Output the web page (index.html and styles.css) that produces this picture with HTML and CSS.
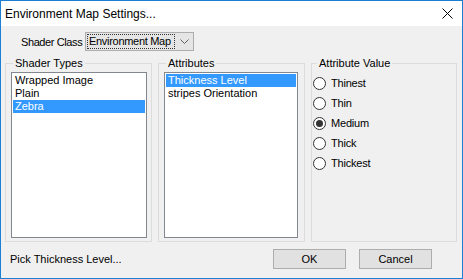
FILE: index.html
```html
<!DOCTYPE html>
<html lang="en">
<head>
<meta charset="utf-8">
<title>Environment Map Settings...</title>
<link rel="stylesheet" href="styles.css">
</head>
<body>
<div class="window">
  <div class="titlebar">
    <span class="title">Environment Map Settings...</span>
    <svg class="close" width="11" height="11" viewBox="0 0 11 11" aria-label="Close">
      <path d="M0.5 0.5 L10.5 10.5 M10.5 0.5 L0.5 10.5" stroke="#000" stroke-width="1" fill="none"/>
    </svg>
  </div>
  <div class="content">
    <div class="class-row">
      <span class="class-label">Shader Class</span>
      <div class="combo">
        <span class="combo-text">Environment Map</span>
        <svg class="chevron" width="9" height="5" viewBox="0 0 9 5">
          <path d="M0.5 0.5 L4.5 4.5 L8.5 0.5" stroke="#606060" stroke-width="1" fill="none"/>
        </svg>
      </div>
    </div>
    <div class="groups">
      <fieldset class="group">
        <legend>Shader Types</legend>
        <ul class="list list-types">
          <li class="item">Wrapped Image</li>
          <li class="item">Plain</li>
          <li class="item selected">Zebra</li>
        </ul>
      </fieldset>
      <fieldset class="group">
        <legend>Attributes</legend>
        <ul class="list list-attrs">
          <li class="item selected">Thickness Level</li>
          <li class="item">stripes Orientation</li>
        </ul>
      </fieldset>
      <fieldset class="group group-value">
        <legend>Attribute Value</legend>
        <div class="radios">
          <div class="radio-row"><span class="radio"></span><span>Thinest</span></div>
          <div class="radio-row"><span class="radio"></span><span>Thin</span></div>
          <div class="radio-row"><span class="radio checked"></span><span>Medium</span></div>
          <div class="radio-row"><span class="radio"></span><span>Thick</span></div>
          <div class="radio-row"><span class="radio"></span><span>Thickest</span></div>
        </div>
      </fieldset>
    </div>
    <div class="footer">
      <span class="status">Pick Thickness Level...</span>
      <div class="buttons">
        <button class="btn">OK</button>
        <button class="btn">Cancel</button>
      </div>
    </div>
  </div>
</div>
</body>
</html>
```
FILE: styles.css
```css
html, body {
  margin: 0;
  padding: 0;
}
body {
  width: 463px;
  height: 279px;
  overflow: hidden;
  font-family: "Liberation Sans", Arial, sans-serif;
  font-size: 11px;
  color: #000;
  background: #f0f0f0;
}
.window {
  box-sizing: border-box;
  width: 463px;
  height: 279px;
  border: 1px solid #1c7fd4;
  display: flex;
  flex-direction: column;
  background: #f0f0f0;
}
.titlebar {
  flex: none;
  height: 25px;
  background: #fff;
  display: flex;
  align-items: center;
  justify-content: space-between;
  padding: 0 9px 0 4px;
}
.title {
  font-size: 12px;
  color: #000;
  white-space: nowrap;
}
.close {
  display: block;
}
.content {
  flex: 1;
  display: flex;
  flex-direction: column;
  padding: 6px 0 0 4px;
}
.class-row {
  display: flex;
  align-items: center;
  height: 19px;
  padding-left: 16px;
}
.class-label {
  width: 64px;
  white-space: nowrap;
  letter-spacing: -0.4px;
}
.combo {
  box-sizing: border-box;
  width: 109px;
  height: 19px;
  border: 1px solid #adadad;
  background: #e5e5e5;
  display: flex;
  align-items: center;
}
.combo-text {
  box-sizing: border-box;
  width: 88px;
  height: 15px;
  margin-left: 1px;
  border: 1px dotted #333;
  line-height: 13px;
  padding-left: 1px;
  white-space: nowrap;
  overflow: hidden;
  letter-spacing: -0.3px;
}
.chevron {
  display: block;
  margin-left: 5px;
}
.groups {
  display: flex;
  gap: 6px;
  margin-top: 6px;
}
.group {
  box-sizing: border-box;
  width: 147px;
  min-width: 0;
  margin: 0;
  padding: 0 4px 3px 5px;
  border: 1px solid #dcdcdc;
}
.group legend {
  padding: 0 2px;
  margin-left: 2px;
  line-height: 13px;
  font-size: 11px;
}
.group-value {
  width: 146px;
  padding-left: 1px;
}
.group-value legend {
  margin-left: 4px;
}
.list {
  box-sizing: border-box;
  list-style: none;
  margin: 2px 0 0 0;
  padding: 1px 0 0 0;
  height: 166px;
  background: #fff;
  border: 1px solid #828790;
}
.list-types {
  width: 136px;
}
.list-attrs {
  width: 134px;
}
.item {
  margin: 0 1px;
  padding-left: 2px;
  height: 13px;
  line-height: 13px;
  white-space: nowrap;
}
.item.selected {
  background: #3399ff;
  color: #fff;
}
.radios {
  padding-top: 3px;
  display: flex;
  flex-direction: column;
}
.radio-row {
  height: 20px;
  display: flex;
  align-items: center;
  letter-spacing: -0.2px;
}
.radio {
  box-sizing: border-box;
  width: 13px;
  height: 13px;
  border: 1px solid #333;
  border-radius: 50%;
  background: #fff;
  margin-right: 5px;
  display: flex;
  align-items: center;
  justify-content: center;
}
.radio.checked::after {
  content: "";
  width: 7px;
  height: 7px;
  border-radius: 50%;
  background: #333;
}
.footer {
  flex: 1;
  display: flex;
  align-items: center;
  padding: 0 30px 2px 5px;
}
.status {
  white-space: nowrap;
}
.buttons {
  margin-left: auto;
  display: flex;
  gap: 13px;
}
.btn {
  box-sizing: border-box;
  width: 73px;
  height: 20px;
  border: 1px solid #adadad;
  background: #e1e1e1;
  font-family: "Liberation Sans", Arial, sans-serif;
  font-size: 11px;
  color: #000;
  padding: 0;
  margin: 0;
}
```
